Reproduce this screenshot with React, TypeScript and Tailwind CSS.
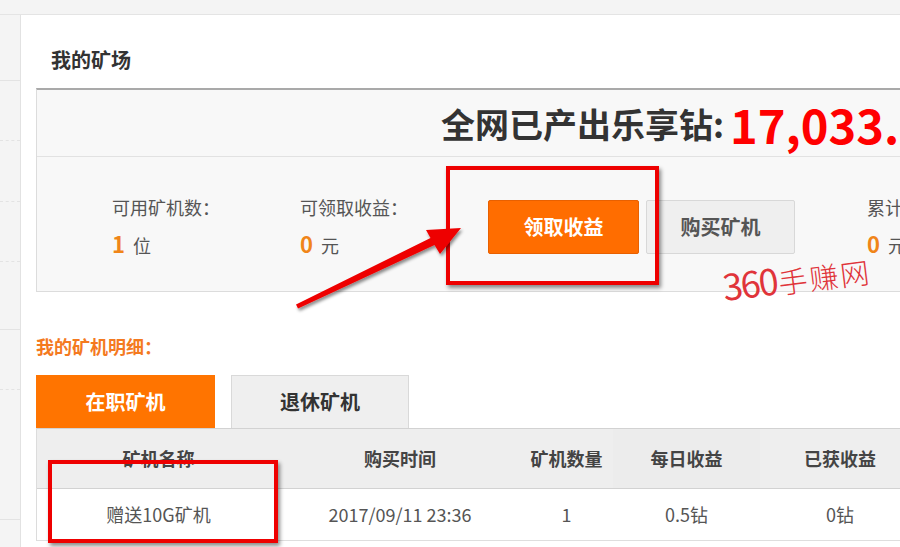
import React from "react";

const font = { fontFamily: '"Microsoft YaHei", "Noto Sans CJK SC", "Noto Sans", sans-serif' };

function Stat({ label, value, unit }: { label: string; value: string; unit: string }) {
  return (
    <div className="w-[188px] shrink-0">
      <p className="text-[18px] text-[#555] leading-[24px]">{label}</p>
      <p className="mt-[11px] leading-[26px] text-[#555]">
        <span className="text-[22px] font-bold text-[#f08519]">{value}</span>
        <span className="text-[18px] ml-[8px]">{unit}</span>
      </p>
    </div>
  );
}

export default function App() {
  const sideRows = [
    { h: "h-[66px]", line: "border-solid" },
    { h: "h-[60px]", line: "border-dashed" },
    { h: "h-[61px]", line: "border-dashed" },
    { h: "h-[60px]", line: "border-dashed" },
    { h: "h-[68px]", line: "border-solid" },
    { h: "h-[60px]", line: "border-dashed" },
    { h: "h-[130px]", line: "border-solid" },
  ];

  const cols = [
    { w: "w-[243px]", head: "矿机名称", cell: "赠送10G矿机" },
    { w: "w-[240px]", head: "购买时间", cell: "2017/09/11 23:36" },
    { w: "w-[93px]", head: "矿机数量", cell: "1" },
    { w: "w-[147px]", head: "每日收益", cell: "0.5钻" },
    { w: "w-[160px]", head: "已获收益", cell: "0钻" },
  ];

  return (
    <div className="relative w-[900px] h-[547px] overflow-hidden bg-[#f4f4f4]" style={font}>
      <div className="h-[15px] border-b border-[#e4e4e4]" />
      <div className="flex h-[532px]">
        {/* sidebar */}
        <div className="w-[21px] shrink-0 bg-[#f4f4f4] border-r border-[#e2e2e2]">
          {sideRows.map((r, i) => (
            <div key={i} className={`${r.h} border-b border-[#e3e3e3] ${r.line}`} />
          ))}
        </div>

        {/* main panel */}
        <div className="flex-1 bg-white pl-[15px] min-w-0">
          <h1 className="pt-[32px] pl-[15px] text-[20px] font-bold text-[#333] leading-[26px]">我的矿场</h1>

          <div className="mt-[15px] w-[900px] bg-[#f8f8f8] border-t-2 border-t-[#a9a9a9] border-l border-b border-[#dcdcdc]">
            <div className="h-[67px] flex items-center pl-[404px] border-b border-[#e2e2e2] whitespace-nowrap">
              <span className="text-[34px] font-bold text-[#333]">全网已产出乐享钻:</span>
              <span className="ml-[6px] text-[47px] font-bold text-[#f00] leading-none">17,033.</span>
            </div>
            <div className="h-[134px] flex items-center pl-[75px] pt-[6px] whitespace-nowrap">
              <Stat label="可用矿机数：" value="1" unit="位" />
              <Stat label="可领取收益：" value="0" unit="元" />
              <button className="w-[151px] h-[54px] shrink-0 bg-[#ff6d00] border border-[#e86000] rounded-[2px] text-white text-[20px] font-bold">
                领取收益
              </button>
              <button className="ml-[7px] w-[149px] h-[54px] shrink-0 bg-[#efefef] border border-[#d8d8d8] rounded-[2px] text-[#555] text-[20px] font-bold">
                购买矿机
              </button>
              <div className="ml-[72px] w-[120px] shrink-0">
                <p className="text-[18px] text-[#555] leading-[24px]">累计收益：</p>
                <p className="mt-[11px] leading-[26px] text-[#555]">
                  <span className="text-[22px] font-bold text-[#f08519]">0</span>
                  <span className="text-[18px] ml-[8px]">元</span>
                </p>
              </div>
            </div>
          </div>

          <h2 className="mt-[42px] text-[18px] font-bold text-[#f47a1f] leading-[24px]">我的矿机明细：</h2>

          <div className="mt-[17px] flex items-end h-[53px]">
            <div className="w-[179px] h-[53px] flex items-center justify-center bg-[#ff7400] text-white text-[20px] font-bold">
              在职矿机
            </div>
            <div className="ml-[16px] w-[178px] h-[53px] flex items-center justify-center bg-[#efefef] border border-b-0 border-[#d9d9d9] text-[#333] text-[20px] font-bold">
              退休矿机
            </div>
          </div>

          <div className="w-[900px] border-l border-[#dcdcdc]">
            <div className="flex h-[61px] bg-[#eeeeee] border-t border-b border-[#d2d2d2]">
              {cols.map((c, i) => (
                <div
                  key={i}
                  className={`${c.w} shrink-0 flex items-center justify-center text-[18px] font-bold text-[#444] ${i === 3 ? "bg-[#ececec]" : ""}`}
                >
                  {c.head}
                </div>
              ))}
            </div>
            <div className="flex h-[52px] bg-white border-b border-[#dedede]">
              {cols.map((c, i) => (
                <div key={i} className={`${c.w} shrink-0 flex items-center justify-center text-[18px] text-[#555]`}>
                  {c.cell}
                </div>
              ))}
            </div>
          </div>
        </div>
      </div>

      {/* annotations laid over the page */}
      <div className="absolute left-[446px] top-[166px] w-[213px] h-[119px] border-[4px] border-[#ee0000] shadow-[2px_3px_4px_rgba(0,0,0,0.45)]" />
      <div className="absolute left-[48px] top-[460px] w-[230px] h-[83px] border-[4px] border-[#ee0000] shadow-[2px_3px_4px_rgba(0,0,0,0.45)]" />
      <svg className="absolute left-0 top-0" width="900" height="547" viewBox="0 0 900 547">
        <defs>
          <filter id="sh" x="-10%" y="-10%" width="130%" height="140%">
            <feDropShadow dx="1.5" dy="2.5" stdDeviation="1.5" floodColor="#000" floodOpacity="0.45" />
          </filter>
        </defs>
        <polygon
          filter="url(#sh)"
          fill="#ee0000"
          points="298,308.5 434.5,245 440,254 461,228 426,230 430.5,238 296,304.5"
        />
      </svg>
      <div className="absolute left-[722px] top-[258px] -rotate-[7deg] text-[#e0343a] leading-none whitespace-nowrap">
        <span className="text-[36px] tracking-[-2px]">360</span>
        <span className="text-[29px] font-light tracking-[2px] ml-[2px]">手赚网</span>
      </div>
    </div>
  );
}
